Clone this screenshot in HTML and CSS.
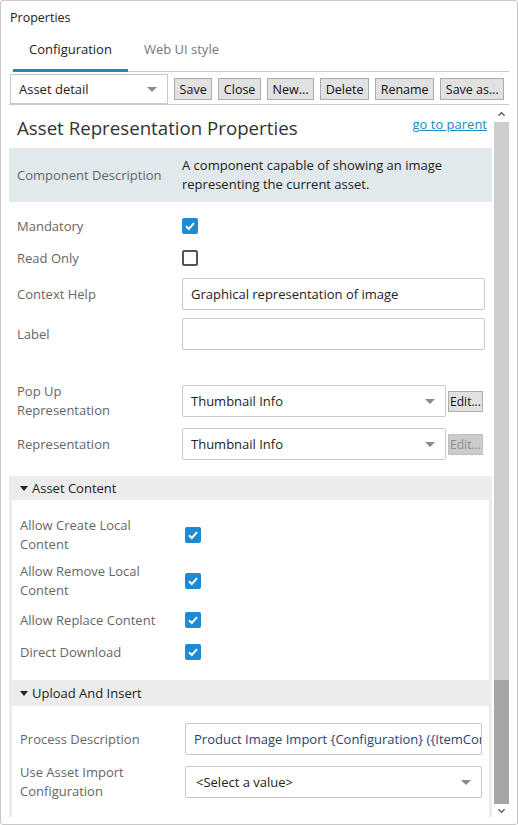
FILE: index.html
```html
<!DOCTYPE html>
<html>
  <head>
    <title>Properties</title>
    <link rel="stylesheet" href="styles.css">
  </head>

  <body>
    <div class="frame">
      <div class="title">Properties</div>

      <div class="tabs">
        <div class="tab active">Configuration</div>
        <div class="tab">Web UI style</div>
      </div>

      <div class="toolbar">
        <div class="field select toolbar-select">Asset detail<span class="caret"></span></div>
        <button class="button">Save</button>
        <button class="button">Close</button>
        <button class="button">New...</button>
        <button class="button">Delete</button>
        <button class="button">Rename</button>
        <button class="button">Save as...</button>
      </div>

      <div class="panel">
        <div class="content">
          <div class="heading">
            <h2>Asset Representation Properties</h2>
            <a href="#" class="parent-link">go to parent</a>
          </div>

          <div class="row description">
            <div class="label">Component Description</div>
            <div class="value">A component capable of showing an image<br />representing the current asset.</div>
          </div>

          <div class="row first">
            <div class="label">Mandatory</div>
            <div class="value">
              <span class="check"><svg viewBox="0 0 16 16"><polyline points="4,8.3 6.8,11 12,5.2" /></svg></span>
            </div>
          </div>
          <div class="row">
            <div class="label">Read Only</div>
            <div class="value"><span class="check empty"></span></div>
          </div>
          <div class="row">
            <div class="label">Context Help</div>
            <div class="value"><div class="field">Graphical representation of image</div></div>
          </div>
          <div class="row">
            <div class="label">Label</div>
            <div class="value"><div class="field"></div></div>
          </div>

          <div class="spacer"></div>

          <div class="row">
            <div class="label">Pop Up<br />Representation</div>
            <div class="value group">
              <div class="field select wide">Thumbnail Info<span class="caret"></span></div>
              <button class="button small">Edit...</button>
            </div>
          </div>
          <div class="row">
            <div class="label">Representation</div>
            <div class="value group">
              <div class="field select wide">Thumbnail Info<span class="caret"></span></div>
              <button class="button small" disabled>Edit...</button>
            </div>
          </div>

          <!-- Asset content section -->
          <div class="section">
            <div class="section-head"><span class="triangle"></span>Asset Content</div>
            <div class="section-body">
              <div class="row">
                <div class="label">Allow Create Local<br />Content</div>
                <div class="value">
                  <span class="check"><svg viewBox="0 0 16 16"><polyline points="4,8.3 6.8,11 12,5.2" /></svg></span>
                </div>
              </div>
              <div class="row">
                <div class="label">Allow Remove Local<br />Content</div>
                <div class="value">
                  <span class="check"><svg viewBox="0 0 16 16"><polyline points="4,8.3 6.8,11 12,5.2" /></svg></span>
                </div>
              </div>
              <div class="row">
                <div class="label">Allow Replace Content</div>
                <div class="value">
                  <span class="check"><svg viewBox="0 0 16 16"><polyline points="4,8.3 6.8,11 12,5.2" /></svg></span>
                </div>
              </div>
              <div class="row">
                <div class="label">Direct Download</div>
                <div class="value">
                  <span class="check"><svg viewBox="0 0 16 16"><polyline points="4,8.3 6.8,11 12,5.2" /></svg></span>
                </div>
              </div>
            </div>
          </div>

          <!-- Upload section -->
          <div class="section next">
            <div class="section-head"><span class="triangle"></span>Upload And Insert</div>
            <div class="section-body">
              <div class="row">
                <div class="label">Process Description</div>
                <div class="value"><div class="field process">Product Image Import {Configuration} ({ItemConfiguration})</div></div>
              </div>
              <div class="row">
                <div class="label">Use Asset Import<br />Configuration</div>
                <div class="value">
                  <div class="field select placeholder">&lt;Select a value&gt;<span class="caret"></span></div>
                </div>
              </div>
            </div>
          </div>
        </div>

        <div class="scrollbar">
          <div class="sb-arrow"><svg viewBox="0 0 10 6"><polyline points="1.5,5 5,1.5 8.5,5" /></svg></div>
          <div class="sb-track"></div>
          <div class="sb-thumb"></div>
          <div class="sb-arrow down"><svg viewBox="0 0 10 6"><polyline points="1.5,1 5,4.5 8.5,1" /></svg></div>
        </div>
      </div>
    </div>
  </body>
</html>
```

FILE: styles.css
```css
* {
  box-sizing: border-box;
}

body {
  margin: 0;
  font-family: "Open Sans", "Noto Sans", sans-serif;
  font-size: 13px;
  color: #222;
  background-color: #fff;
}

.frame {
  width: 518px;
  height: 825px;
  border: 1px solid #c8c8c8;
  border-radius: 3px;
  display: flex;
  flex-direction: column;
  overflow: hidden;
}

.title {
  height: 27px;
  padding: 8px 9px 0;
  line-height: 18px;
  font-size: 12.5px;
}

.tabs {
  display: flex;
  height: 44px;
  margin: 0 8px 0 12px;
  border-bottom: 1px solid #c8c8c8;
}

.tab {
  height: 44px;
  margin-bottom: -1px;
  padding: 12px 16px 0;
  line-height: 18px;
  font-size: 13px;
  color: #777;
  border-bottom: 3px solid transparent;
}

.tab.active {
  color: #222;
  border-bottom-color: #1b87c9;
}

.toolbar {
  display: flex;
  align-items: center;
  gap: 6px;
  height: 32px;
  padding: 2px 0 0 9px;
}

.button {
  height: 22px;
  padding: 0 5px;
  font-family: inherit;
  font-size: 12.5px;
  color: #111;
  background-color: #e1e1e1;
  border: 1px solid #adadad;
  border-radius: 0;
}

.toolbar .button {
  padding: 0 4.6px;
}

.button.small {
  height: 21px;
  width: 35px;
  padding: 0;
  font-size: 12px;
}

.button:disabled {
  color: #8c8c8c;
  background-color: #cccccc;
  border-color: #bfbfbf;
}

.field {
  display: flex;
  align-items: center;
  height: 32px;
  padding: 0 8px;
  border: 1px solid #c8c8c8;
  border-radius: 2px;
  background-color: #fff;
  white-space: nowrap;
  overflow: hidden;
}

.toolbar-select {
  width: 158px;
  height: 30px;
  border-radius: 0;
}

.select .caret {
  margin-left: auto;
  margin-right: 2px;
  border-left: 5px solid transparent;
  border-right: 5px solid transparent;
  border-top: 5px solid #8a8a8a;
}

.panel {
  flex: 1;
  min-height: 0;
  display: flex;
  margin: 0 8px 6px 8px;
  border-top: 1px solid #c8c8c8;
}

.content {
  flex: 1;
  overflow: hidden;
}

.heading {
  display: flex;
  justify-content: space-between;
  align-items: flex-start;
  padding: 10px 5px 7px 8px;
}

.heading h2 {
  margin: 0;
  font-size: 18.7px;
  font-weight: 400;
  line-height: 26px;
  color: #333;
}

.parent-link {
  line-height: 18px;
  font-size: 13px;
  color: #1a8ac6;
}

.row {
  display: flex;
  align-items: center;
  min-height: 32px;
  padding: 4px 7px 4px 8px;
}

.row .label {
  width: 165px;
  flex-shrink: 0;
  line-height: 19px;
  color: #666;
}

.row .value {
  flex: 1;
  min-width: 0;
  line-height: 19px;
}

.description {
  padding: 8px 7px 8px 8px;
  background-color: #e1e9ec;
}

.row.first {
  margin-top: 8px;
}

.check {
  display: block;
  width: 16px;
  height: 16px;
  border-radius: 2px;
  background-color: #1d8ad1;
}

.check svg {
  display: block;
  width: 16px;
  height: 16px;
  fill: none;
  stroke: #fff;
  stroke-width: 2;
}

.check.empty {
  background-color: #fff;
  border: 2px solid #555;
}

.spacer {
  height: 24px;
}

.group {
  display: flex;
  align-items: center;
  gap: 2px;
}

.select.wide {
  width: 264px;
  flex-shrink: 0;
}

.section {
  margin-top: 12px;
  padding: 0 3px;
  background-color: #ececec;
}

.section.next {
  margin-top: 0;
}

.section-head {
  display: flex;
  align-items: center;
  height: 24px;
  padding-left: 8px;
  font-size: 13px;
  color: #222;
}

.section.next .section-head {
  height: 26px;
}

.triangle {
  margin-right: 4px;
  border-left: 4px solid transparent;
  border-right: 4px solid transparent;
  border-top: 5px solid #222;
}

.section-body {
  padding: 12px 0;
  background-color: #fff;
}

.section.next .section-body {
  padding-top: 13px;
}

.field.process {
  color: #2a3f73;
}

.field.placeholder {
  padding-left: 10px;
}

.scrollbar {
  width: 15px;
  margin-left: 2px;
  display: flex;
  flex-direction: column;
}

.sb-arrow {
  height: 17px;
  display: flex;
  align-items: center;
  justify-content: center;
}

.sb-arrow.down {
  height: 14px;
}

.sb-arrow svg {
  width: 9px;
  height: 6px;
  fill: none;
  stroke: #606060;
  stroke-width: 1.5;
}

.sb-track {
  flex: 1;
  background-color: #cdcdcd;
}

.sb-thumb {
  height: 124px;
  background-color: #a6a6a6;
}
```
